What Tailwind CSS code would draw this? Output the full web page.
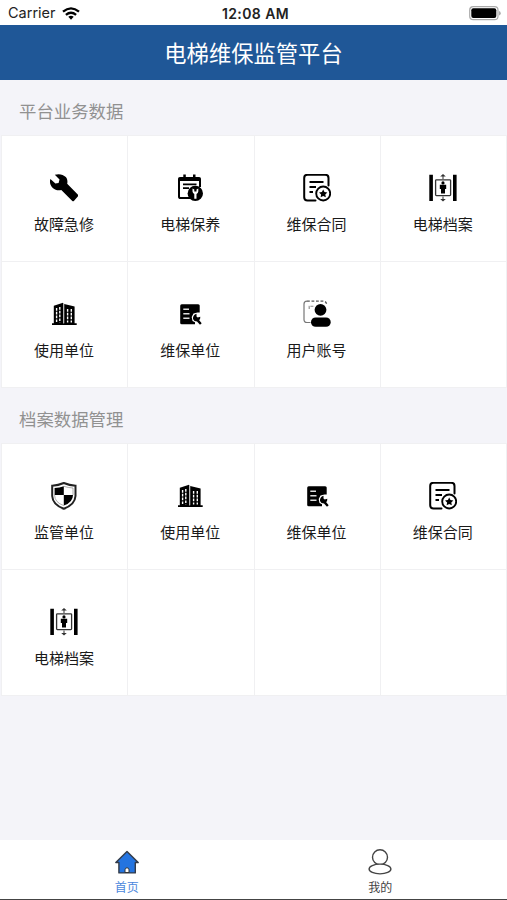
<!DOCTYPE html>
<html lang="zh-CN">
<head>
  <meta charset="UTF-8" />
  <meta name="viewport" content="width=device-width, initial-scale=1.0" />
  <title>电梯维保监管平台</title>
  <script src="https://cdn.jsdelivr.net/npm/@tailwindcss/browser@4"></script>
</head>
<body class="bg-[#f4f4f9] font-['Noto_Sans_CJK_SC',sans-serif] text-[#1a1a1a]">
  <!-- Icons -->
  <svg class="hidden">
    <symbol id="repair" viewBox="0 0 28 28">
      <path d="M4.800.8C8.500-.5 13.200.1 15.800 3.100C17.500 5.200 17.700 7.500 17.200 9.800L28 20.800Q28.600 21.600 28 22.300L23.900 26.900Q23.100 27.600 22.300 26.900L11.300 15.900C8.500 16.700 5.300 16.200 2.800 13.900C0 11.200-.6 7.600.4 5L5.400 9.500L8.600 8.900L9.500 5.600Z" />
    </symbol>
    <symbol id="maintain" viewBox="0 0 28 28">
      <path d="M14 24H4.600Q3 24 3 22.400V5.600Q3 4 4.600 4H22.400Q24 4 24 5.600V13" fill="none" stroke="#000" stroke-width="2" />
      <path d="M2.500 3.500H24.500V7H2.500ZM7.300.5H9.800V5H7.300ZM17 .5H19.500V5H17ZM7 9.600H20.500V11.300H7ZM7 13.300H13V15H7Z" />
      <circle cx="19.300" cy="19.400" r="7.700" />
      <path d="M16.500 14.500V17.500Q16.700 19.200 18.300 20V24.700H20.500V20Q22.100 19.200 22.300 17.500V14.500L20.500 15.500V17.500H18.300V15.500Z" fill="#fff" />
    </symbol>
    <symbol id="contract" viewBox="0 0 28 28">
      <path d="M12.500 26.500H4.500Q1.200 26.500 1.200 23.200V4Q1.200.8 4.500.8H22.200Q25.500.8 25.500 4V11.500" fill="none" stroke="#000" stroke-width="2" stroke-linecap="round" />
      <path d="M6.500 8H20.500M6.500 13H13M6.500 18H10" fill="none" stroke="#000" stroke-width="2" />
      <circle cx="20.200" cy="19.500" r="7" fill="none" stroke="#000" stroke-width="1.900" />
      <path d="M20.200 15.400L21.500 18L24.400 18.400L22.300 20.400L22.800 23.300L20.200 21.900L17.600 23.300L18.100 20.400L16 18.400L18.900 18Z" />
    </symbol>
    <symbol id="elevator" viewBox="0 0 28 28">
      <path d="M.3.800H3.900V27H.3ZM24 .800H27.600V27H24Z" />
      <rect x="6.600" y="5.800" width="15" height="15.800" rx=".8" fill="none" stroke="#333" stroke-width="1.300" />
      <path d="M14 0L16.800 2.600H14.500V5H13.500V2.600H11.200ZM14 27.500L16.800 24.900H14.500V22.500H13.500V24.900H11.200Z" fill="#333" />
      <circle cx="14" cy="8.900" r="1.600" />
      <path d="M10.800 10.800H17.200V15H16V19.500H12V15H10.800Z" />
    </symbol>
    <symbol id="building" viewBox="0 0 28 28">
      <path d="M3.800 5.700L13 2.800V23.600H3.800ZM14.200 4L24.600 6.400V23.600H14.200ZM2 23.300H26.700V25H2Z" />
      <path d="M6.600 8V22.500M9.800 7V22.500M17.600 9V22.500M21.300 9V22.500" stroke="#fff" stroke-width="1.400" stroke-dasharray="2.700 1.100" />
      <path d="M13.600 3V23.300" stroke="#999" stroke-width=".8" />
    </symbol>
    <symbol id="company" viewBox="0 0 28 28">
      <rect x="4.200" y="4.200" width="19.500" height="20" rx="1.500" />
      <path d="M7.300 9.200H13M7.300 13.700H13.500M7.300 18.200H13.500" stroke="#ddd" stroke-width="1.400" />
      <path d="M24.800 12.500H21.500L17.500 13.500L15.700 17L16.500 21L19 22.300V25H24.800Z" fill="#fff" />
      <path d="M20.500 13.700V16.500L21.700 17.600L24.300 16.800Q24.500 19 23.200 20.200L25.700 23.300L24 24.800L21 21.600Q18 21.500 17 19Q16.600 15 20.500 13.700Z" />
    </symbol>
    <symbol id="account" viewBox="0 0 28 28">
      <path d="M7.500 22.500H4Q1 22.500 1 19.500V4Q1 1.200 4 1.200" fill="none" stroke="#777" stroke-width="1.200" />
      <path d="M4 1.200H20Q23.500 1.200 23.800 5" fill="none" stroke="#555" stroke-width="1.300" stroke-dasharray="2.800 1.700" />
      <path d="M6.200 9V6.200H11.500" fill="none" stroke="#888" stroke-width="1.100" stroke-dasharray="3 1" />
      <circle cx="17.500" cy="9.800" r="5.900" />
      <rect x="8" y="17.500" width="19.700" height="9.300" rx="4.600" />
    </symbol>
    <symbol id="shield" viewBox="0 0 28 28">
      <path d="M13.800 1Q19.500 3.400 25.500 3.700V14Q25 22.500 13.800 26.800Q2.600 22.500 2.200 14V3.700Q8.200 3.400 13.800 1Z" fill="#fff" stroke="#222" stroke-width="2" />
      <path d="M13.800 4.300V13H4.600V6Q9.500 5.800 13.800 4.300ZM13.800 13H23Q23 20.400 13.800 23.600Z" />
      <path d="M13.800 4.300Q18.500 5.800 23 6V13M4.600 13Q4.600 20.400 13.800 23.600" fill="none" stroke="#777" stroke-width=".6" />
    </symbol>
  </svg>

  <div class="flex h-[900px] w-[507px] flex-col overflow-hidden border-b border-[#444]">
    <!-- Status bar -->
    <div class="grid h-[25px] shrink-0 grid-cols-3 items-center bg-white pt-0.5 pr-1.5 pl-2 font-['Inter',sans-serif] text-sm text-[#222]">
      <div class="flex items-center gap-1.5">
        <span class="text-[14.500px]">Carrier</span>
        <svg class="h-[13px] w-[18px]" viewBox="0 0 18 13" fill="none" stroke="#000" stroke-width="2.300">
          <path d="M1 4.700Q9-2 17 4.700M3.900 7.800Q9 3.600 14.100 7.800" />
          <path d="M6.300 9.800Q9 7.700 11.700 9.800L9 12.700Z" fill="#000" stroke="none" />
        </svg>
      </div>
      <div class="pl-0.5 text-center font-semibold tracking-[0.400px] whitespace-nowrap">12:08 AM</div>
      <svg class="h-[15px] w-8 justify-self-end" viewBox="0 0 32 15">
        <rect x=".7" y=".7" width="28.300" height="13" rx="3.500" fill="#fff" stroke="#aaa" stroke-width="1.200" />
        <rect x="2.300" y="2.300" width="25" height="9.800" rx="2" />
        <path d="M30.200 5V9.600Q31.600 9 31.600 7.300T30.200 5Z" fill="#999" />
      </svg>
    </div>

    <header class="flex h-[55px] shrink-0 items-center justify-center bg-[#1f5797] text-[22.3px] text-white">电梯维保监管平台</header>

    <main class="flex-1">
      <h2 class="flex h-[55px] items-center pt-2 pl-[19px] text-[17.4px] text-[#919191]">平台业务数据</h2>
      <div id="business" class="ml-px grid grid-cols-4 border-t border-l border-[#f0f0f2] bg-white"></div>
      <h2 class="flex h-[55px] items-center pt-2 pl-[19px] text-[17.4px] text-[#919191]">档案数据管理</h2>
      <div id="archive" class="ml-px grid grid-cols-4 border-t border-l border-[#f0f0f2] bg-white"></div>
    </main>

    <nav class="grid h-[59px] shrink-0 grid-cols-2 bg-white text-xs">
      <a class="flex flex-col items-center pt-[9px] text-[#4b87dc]">
        <svg class="h-[26px] w-[26px]" viewBox="0 0 26 26">
          <path d="M13 2.600L24.200 13.500H21.300V23.900H4.900V13.500H1.800Z" fill="#2474e0" stroke="#333b48" stroke-width="1.400" stroke-linejoin="round" />
          <path d="M11 23.500V20.800Q11 18.800 13 18.800T15 20.800V23.500Z" fill="#fff" stroke="#333" />
        </svg>
        <span class="leading-6">首页</span>
      </a>
      <a class="flex flex-col items-center pt-[9px] text-[#444]">
        <svg class="h-[26px] w-[26px]" viewBox="0 0 26 26" fill="none" stroke="#444" stroke-width="1.400">
          <circle cx="13" cy="8.200" r="7.500" />
          <ellipse cx="13" cy="20" rx="10.900" ry="4.900" fill="#fff" />
        </svg>
        <span class="leading-6">我的</span>
      </a>
    </nav>
  </div>

  <script>
    const business = [
      ['repair', '故障急修'], ['maintain', '电梯保养'], ['contract', '维保合同'], ['elevator', '电梯档案'],
      ['building', '使用单位'], ['company', '维保单位'], ['account', '用户账号'], null
    ];
    const archive = [
      ['shield', '监管单位'], ['building', '使用单位'], ['company', '维保单位'], ['contract', '维保合同'],
      ['elevator', '电梯档案'], null, null, null
    ];
    function renderGrid(id, items) {
      document.getElementById(id).innerHTML = items.map(item => `
        <div class="flex h-[126px] flex-col items-center border-r border-b border-[#f0f0f2] pt-[38px] pr-px">
          ${item ? `
          <svg class="h-7 w-7"><use href="#${item[0]}" /></svg>
          <span class="mt-2.5 text-[15px] leading-6">${item[1]}</span>` : ''}
        </div>
      `).join('');
    }
    renderGrid('business', business);
    renderGrid('archive', archive);
  </script>
</body>
</html>
